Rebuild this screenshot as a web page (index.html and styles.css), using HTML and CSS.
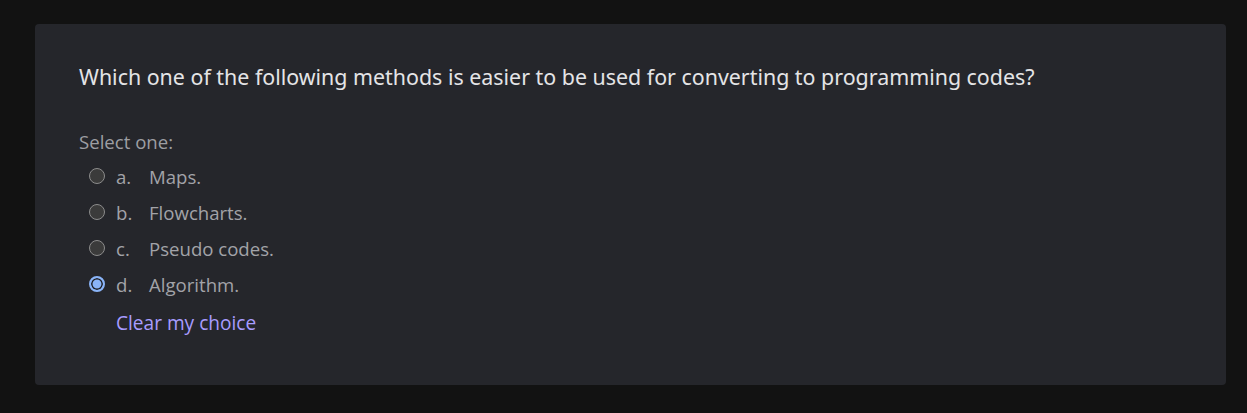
FILE: index.html
```html
<!DOCTYPE html>
<html>
<head>
<meta charset="utf-8">
<link rel="stylesheet" href="styles.css">
</head>
<body>
<div class="page">
  <div class="card">
    <p class="question">Which one of the following methods is easier to be used for converting to programming codes?</p>
    <div class="prompt">Select one:</div>
    <div class="answers">
      <div class="opt"><span class="radio"></span><span class="letter">a.</span><span class="text">Maps.</span></div>
      <div class="opt"><span class="radio"></span><span class="letter">b.</span><span class="text">Flowcharts.</span></div>
      <div class="opt"><span class="radio"></span><span class="letter">c.</span><span class="text">Pseudo codes.</span></div>
      <div class="opt"><span class="radio checked"></span><span class="letter">d.</span><span class="text">Algorithm.</span></div>
    </div>
    <a class="clear" href="#">Clear my choice</a>
  </div>
</div>
</body>
</html>
```
FILE: styles.css
```css
html, body { margin: 0; padding: 0; background: #121212; }
.page { padding: 24px 21px 28px 35px; }
.card {
  background: #25262b;
  border-radius: 4px;
  padding: 42px 44px 40px 44px;
  height: 361px;
  box-sizing: border-box;
  font-family: "Open Sans", sans-serif;
}
.question {
  margin: -5px 0 37px 0;
  font-family: "Noto Sans", sans-serif;
  font-size: 21.4px;
  line-height: 32px;
  color: #e4e4e6;
}
.prompt { color: #9d9ea3; font-size: 18.6px; line-height: 24px; margin-bottom: 4px; }
.answers { display: flex; flex-direction: column; }
.opt { display: flex; align-items: center; height: 36px; padding-left: 10px; color: #a2a3a8; font-size: 18.6px; }
.radio {
  width: 16px; height: 16px; border-radius: 50%;
  border: 1.5px solid #8c8c8c; background: #3b3b3b; box-sizing: border-box;
  margin-right: 11px;
}
.radio.checked {
  border: 2px solid #8ab4f8; background: #8ab4f8;
  box-shadow: inset 0 0 0 1.5px #1c1c1f;
}
.letter { width: 33px; }
.clear { display: inline-block; margin: 9px 0 0 37px; color: #a89cff; text-decoration: none; font-size: 19.1px; line-height: 24px; }
```
